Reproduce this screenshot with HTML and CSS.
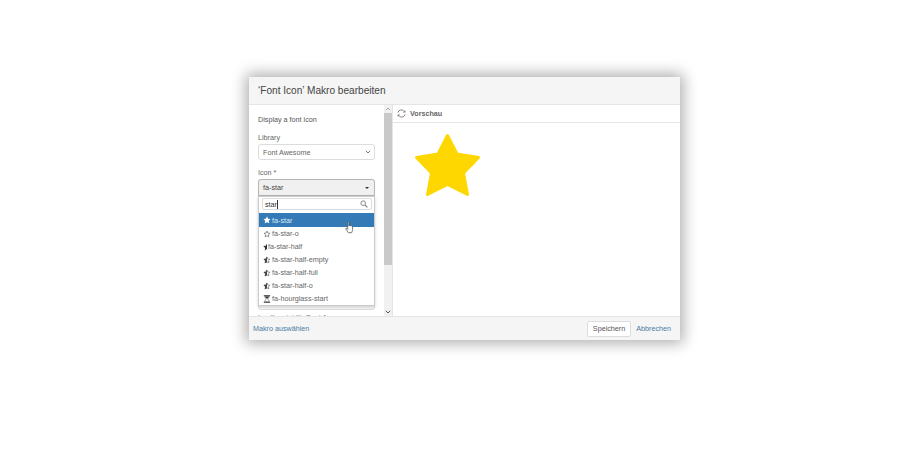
FILE: index.html
```html
<!DOCTYPE html>
<html>
<head>
    <title>Font Icon Makro</title>
    <link rel="stylesheet" href="styles.css">
</head>
<body>
    <div class="dialog">
        <div class="dialog-header">‘Font Icon’ Makro bearbeiten</div>

        <div class="dialog-body">
            <div class="form-col">
                <p class="intro">Display a font icon</p>

                <label class="field-label">Library</label>
                <div class="select-box">
                    <span>Font Awesome</span>
                    <svg class="chevron" width="6" height="4" viewBox="0 0 6 4"><path d="M.8.8L3 3 5.200.8" fill="none" stroke="#777" stroke-width="1"/></svg>
                </div>

                <label class="field-label icon-label">Icon *</label>
                <div class="picker">
                    <div class="picker-toggle">
                        <span>fa-star</span>
                        <span class="caret"></span>
                    </div>
                    <div class="picker-menu">
                        <div class="search-row">
                            <div class="search-box">
                                <span class="search-text">star</span>
                                <svg class="search-icon" width="8" height="8" viewBox="0 0 9 9"><circle cx="3.600" cy="3.600" r="2.600" fill="none" stroke="#888" stroke-width="1.100"/><path d="M5.600 5.600L8.300 8.300" stroke="#888" stroke-width="1.500"/></svg>
                            </div>
                        </div>
                        <ul class="options">
                            <li class="active">
                                <svg class="opt-icon" viewBox="0 0 10 10"><use href="#star-full"/></svg>fa-star
                            </li>
                            <li>
                                <svg class="opt-icon" viewBox="0 0 10 10"><use href="#star-line"/></svg>fa-star-o
                            </li>
                            <li>
                                <svg class="opt-icon half" viewBox="0 0 5 10"><path d="M5 .6v6.900L2.100 9.300l.6-3.200L.3 3.800l3.200-.4z" fill="#333"/></svg>fa-star-half
                            </li>
                            <li>
                                <svg class="opt-icon" viewBox="0 0 10 10"><use href="#star-half"/></svg>fa-star-half-empty
                            </li>
                            <li>
                                <svg class="opt-icon" viewBox="0 0 10 10"><use href="#star-half"/></svg>fa-star-half-full
                            </li>
                            <li>
                                <svg class="opt-icon" viewBox="0 0 10 10"><use href="#star-half"/></svg>fa-star-half-o
                            </li>
                            <li>
                                <svg class="opt-icon" viewBox="0 0 10 10"><path d="M1 .3h8v1.400H1zM1 8.300h8v1.400H1z" fill="#333"/><path d="M2.300 1.700h5.400C7.700 4 6 4.500 5.800 5c.2.5 1.900 1 1.900 3.300H2.300C2.300 6 4 5.500 4.200 5 4 4.500 2.300 4 2.300 1.700z" fill="#fff" stroke="#333" stroke-width=".6"/><path d="M2.800 2h4.400C7 3.800 5.500 4.300 5 4.700 4.500 4.300 3 3.800 2.800 2z" fill="#333"/></svg>fa-hourglass-start
                            </li>
                        </ul>
                    </div>
                </div>
                <p class="help-text">Lu dfs-print für Font Awesome</p>
            </div>

            <div class="scrollbar">
                <svg class="sb-arrow" width="6" height="4" viewBox="0 0 6 4"><path d="M.8 3.200L3 1l2.200 2.200" fill="none" stroke="#aaa" stroke-width="1"/></svg>
                <div class="sb-track"><div class="sb-thumb"></div></div>
                <svg class="sb-arrow" width="6" height="4" viewBox="0 0 6 4"><path d="M.8.8L3 3 5.200.8" fill="none" stroke="#555" stroke-width="1"/></svg>
            </div>

            <div class="preview-col">
                <div class="preview-head">
                    <svg width="9" height="9" viewBox="0 0 10 10"><path d="M1 4a4 4 0 0 1 6.500-2M9 6a4 4 0 0 1-6.500 2" fill="none" stroke="#777" stroke-width="1"/><path d="M9.300 1v2.800H6.500zM.7 9V6.200h2.800z" fill="#777"/></svg>
                    <span>Vorschau</span>
                </div>
                <div class="preview-body">
                    <svg class="big-star" width="67" height="64" viewBox="0 0 67 64"><path d="M33.500 2.500L43 21l21.500 3.500-15 15.500 4 21.500-20-10-20 10 4-21.500-15-15.500L24 21z" fill="#ffd700" stroke="#ffd700" stroke-width="3" stroke-linejoin="round"/></svg>
                </div>
            </div>
        </div>

        <div class="dialog-footer">
            <a class="link">Makro auswählen</a>
            <div class="footer-actions">
                <button class="btn">Speichern</button>
                <a class="link">Abbrechen</a>
            </div>
        </div>
    </div>

    <svg class="hand" width="9" height="13" viewBox="0 0 10 15"><path d="M3 1.200c0-.9 1.300-.9 1.300 0v4.600c.1-.8 1.300-.8 1.400 0 .1-.7 1.300-.7 1.400.1.200-.6 1.400-.5 1.400.4v3.700c0 1.500-.7 2.300-1 3.500H3.600C3 12.200 1.800 10.800.8 9.300c-.5-.8.500-1.500 1.100-.8l1.100 1.100z" fill="#fff" stroke="#444" stroke-width=".8" stroke-linejoin="round"/></svg>

    <svg class="defs" width="0" height="0">
        <defs>
            <path id="star-full" d="M5 .4l1.400 3 3.200.4-2.400 2.200.7 3.200L5 7.800 2.100 9.200l.7-3.200L.4 3.800l3.200-.4z" fill="currentColor"/>
            <path id="star-line" d="M5 1.300l1.100 2.500 2.600.3-1.900 1.800.5 2.600L5 7.300 2.700 8.500l.5-2.600-1.900-1.800 2.600-.3z" fill="none" stroke="currentColor" stroke-width=".7"/>
            <g id="star-half">
                <path d="M5 1.300l1.100 2.500 2.600.3-1.900 1.800.5 2.600L5 7.300 2.700 8.500l.5-2.600-1.900-1.800 2.600-.3z" fill="none" stroke="currentColor" stroke-width=".7"/>
                <path d="M5 .4v7.400L2.100 9.200l.7-3.200L.4 3.800l3.200-.4z" fill="currentColor"/>
            </g>
        </defs>
    </svg>
</body>
</html>
```

FILE: styles.css
```css
body {
    margin: 0;
    padding: 77px 0 0 249px;
    height: 373px;
    background: #fff;
    font-family: "Liberation Sans", Arial, sans-serif;
    color: #333;
}

.dialog {
    display: flex;
    flex-direction: column;
    width: 431px;
    height: 263px;
    background: #fff;
    box-shadow: 0 0 14px 3px rgba(0, 0, 0, 0.33);
}

.dialog-header {
    height: 27px;
    padding-left: 9px;
    line-height: 28px;
    font-size: 10.1px;
    color: #444;
    background: #f5f5f5;
    border-bottom: 1px solid #e5e5e5;
    flex: none;
}

.dialog-body {
    display: flex;
    flex: 1;
    min-height: 0;
    overflow: hidden;
}

.form-col {
    width: 135px;
    padding: 0 9px;
    box-sizing: border-box;
    flex: none;
}

.intro {
    margin: 10px 0 0;
    font-size: 7.2px;
    line-height: 10px;
    color: #555;
}

.field-label {
    display: block;
    font-size: 7.2px;
    line-height: 10px;
    color: #666;
    margin-top: 8px;
}

.icon-label {
    margin-top: 8px;
}

.select-box {
    display: flex;
    justify-content: space-between;
    align-items: center;
    height: 14px;
    margin-top: 1px;
    padding: 0 3px 0 4px;
    border: 1px solid #ddd;
    border-radius: 3px;
    font-size: 7.2px;
    color: #666;
}

.picker {
    position: relative;
    height: 131px;
    box-sizing: border-box;
    margin-top: 1px;
    background: #f5f5f5;
    border: 1px solid #ddd;
    border-radius: 3px;
}

.picker-toggle {
    display: flex;
    justify-content: space-between;
    align-items: center;
    height: 15px;
    margin: -1px -1px 0;
    padding: 0 5px 0 4px;
    background: #f0f0f0;
    border: 1px solid #b5b5b5;
    border-radius: 3px 3px 0 0;
    font-size: 7.2px;
    color: #444;
}

.caret {
    width: 0;
    height: 0;
    border-left: 2.5px solid transparent;
    border-right: 2.5px solid transparent;
    border-top: 2.5px solid #333;
}

.picker-menu {
    position: absolute;
    top: 16px;
    left: -1px;
    right: -1px;
    height: 110px;
    box-sizing: border-box;
    background: #fff;
    border: 1px solid #ccc;
    box-shadow: 0 1px 3px rgba(0, 0, 0, 0.18);
}

.search-row {
    padding: 1px 2px 3px 3px;
}

.search-box {
    display: flex;
    justify-content: space-between;
    align-items: center;
    height: 10px;
    padding: 0 3px 0 2px;
    border: 1px solid #ddd;
    border-radius: 2px;
}

.search-text {
    font-size: 7.2px;
    color: #333;
    border-right: 1px solid #333;
    line-height: 9px;
}

.options {
    list-style: none;
    margin: 0;
    padding: 0;
}

.options li {
    display: flex;
    align-items: center;
    height: 13px;
    padding-left: 4px;
    font-size: 7.2px;
    color: #666;
}

.options li.active {
    background: #337ab7;
    color: #dfe9f3;
    height: 14px;
}

.opt-icon {
    width: 8px;
    height: 8px;
    margin-right: 1px;
    flex: none;
    color: #444;
}

.active .opt-icon {
    color: #fff;
}

.opt-icon.half {
    width: 4px;
}

.help-text {
    margin: 3px 0 0;
    font-size: 7.2px;
    line-height: 9px;
    color: #777;
}

.scrollbar {
    display: flex;
    flex-direction: column;
    align-items: center;
    width: 8px;
    background: #f1f1f1;
    flex: none;
}

.sb-arrow {
    flex: none;
    margin: 2px 0;
}

.sb-track {
    flex: 1;
    width: 100%;
}

.sb-thumb {
    height: 152px;
    background: #c9c9c9;
}

.preview-col {
    flex: 1;
    min-width: 0;
    border-left: 1px solid #e5e5e5;
}

.preview-head {
    display: flex;
    align-items: center;
    gap: 4px;
    height: 17px;
    padding-left: 4px;
    border-bottom: 1px solid #e5e5e5;
    font-size: 7.2px;
    font-weight: bold;
    color: #666;
}

.preview-body {
    padding: 10px 0 0 21px;
}

.big-star {
    display: block;
}

.dialog-footer {
    display: flex;
    justify-content: space-between;
    align-items: center;
    height: 24px;
    padding: 0 9px 0 4px;
    background: #f5f5f5;
    border-top: 1px solid #e5e5e5;
    flex: none;
    box-sizing: border-box;
}

.footer-actions {
    display: flex;
    align-items: center;
    gap: 5px;
}

.link {
    font-size: 7.2px;
    color: #4a7ba6;
}

.btn {
    height: 16px;
    padding: 0 5px;
    background: #fff;
    border: 1px solid #ddd;
    border-radius: 2px;
    font: 7.2px "Liberation Sans", Arial, sans-serif;
    color: #555;
}

.hand {
    position: absolute;
    left: 345px;
    top: 221px;
}

.defs {
    position: absolute;
}
```
